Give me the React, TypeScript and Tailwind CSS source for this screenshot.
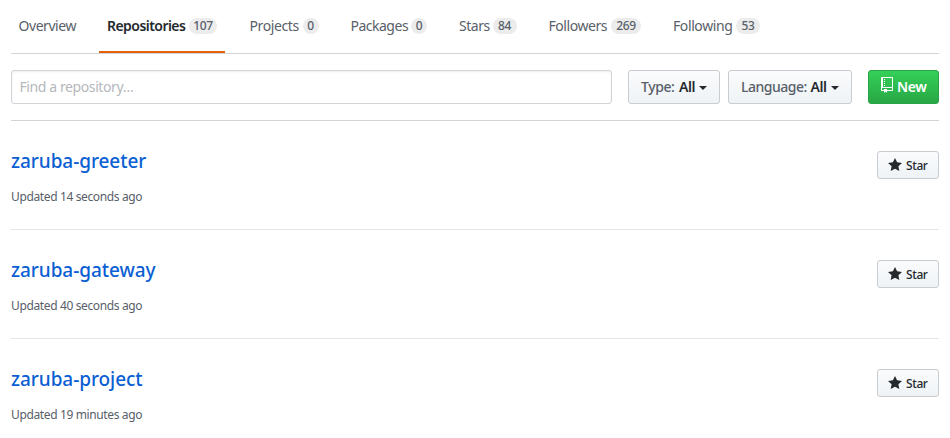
type Tab = { label: string; count?: string; labelClass: string; badgeClass?: string; active?: boolean };

const tabs: Tab[] = [
  { label: "Overview", labelClass: "w-[57px] tracking-[-0.45px]" },
  { label: "Repositories", count: "107", labelClass: "w-[78px] tracking-[-0.55px]", badgeClass: "w-7", active: true },
  { label: "Projects", count: "0", labelClass: "w-[49px] tracking-[-0.4px]", badgeClass: "w-4" },
  { label: "Packages", count: "0", labelClass: "w-[56.5px] tracking-[-0.5px]", badgeClass: "w-4" },
  { label: "Stars", count: "84", labelClass: "w-[29.5px] tracking-[-0.45px]", badgeClass: "w-6" },
  { label: "Followers", count: "269", labelClass: "w-[58.5px] tracking-[-0.45px]", badgeClass: "w-[30px]" },
  { label: "Following", count: "53", labelClass: "w-[59px] tracking-[-0.4px]", badgeClass: "w-6" },
];

const repos = [
  { name: "zaruba-greeter", updated: "Updated 14 seconds ago" },
  { name: "zaruba-gateway", updated: "Updated 40 seconds ago" },
  { name: "zaruba-project", updated: "Updated 19 minutes ago" },
];

const grayButton =
  "flex items-center rounded-[3px] border border-[#c9ccd0] bg-linear-to-b from-[#fafbfc] to-[#eff3f6] whitespace-nowrap";

function Caret() {
  return <span className="mt-px ml-1 h-0 w-0 border-x-4 border-t-4 border-x-transparent border-t-[#24292e]" />;
}

function RepoIcon() {
  return (
    <svg width="12" height="16" viewBox="0 0 12 16" fill="currentColor" className="-mt-1 shrink-0">
      <path fillRule="evenodd" d="M4 9H3V8h1v1zm0-3H3v1h1V6zm0-2H3v1h1V4zm0-2H3v1h1V2zm8-1v12c0 .55-.45 1-1 1H6v2l-1.5-1.5L3 16v-2H1c-.55 0-1-.45-1-1V1c0-.55.45-1 1-1h10c.55 0 1 .45 1 1zm-1 10H1v2h2v-1h3v1h5v-2zm0-10H2v9h9V1z" />
    </svg>
  );
}

function StarIcon() {
  return (
    <svg width="14" height="16" viewBox="0 0 14 16" fill="currentColor" className="shrink-0">
      <path fillRule="evenodd" d="M14 6l-4.9-.64L7 1 4.9 5.36 0 6l3.6 3.26L2.67 14 7 11.67 11.33 14l-.93-4.74L14 6z" />
    </svg>
  );
}

export default function App() {
  return (
    <div className="h-[438px] w-[950px] overflow-hidden bg-white px-[11px] font-['Noto_Sans',sans-serif] text-sm text-[#24292e]">
      <nav className="flex h-[54px] gap-4 border-b border-[#d1d5da]">
        {tabs.map((tab, i) => (
          <a
            key={tab.label}
            className={`-mb-px flex h-[53px] shrink-0 items-center gap-1 border-b-2 ${i === 0 ? "px-[7.5px]" : "px-2"} ${
              tab.active ? "mr-[0.5px] border-[#e36209] font-semibold" : "border-transparent text-[#586069]"
            }`}
          >
            <span className={`leading-5 whitespace-nowrap ${tab.labelClass}`}>{tab.label}</span>
            {tab.count && (
              <span className={`flex h-4 items-center justify-center rounded-full bg-[#ececed] text-xs leading-4 font-medium tracking-[-0.3px] text-[#586069] ${tab.badgeClass}`}>
                {tab.count}
              </span>
            )}
          </a>
        ))}
      </nav>

      <div className="flex h-[67px] items-start border-b border-[#d1d5da] pt-4">
        <input
          className="h-[34px] w-[601px] rounded-[3px] border border-[#d1d5da] px-[7.5px] pb-0.5 tracking-[-0.4px] shadow-[inset_0_1px_2px_rgba(27,31,35,0.075)] outline-none placeholder:text-[#b4b8bc]"
          placeholder="Find a repository…"
        />
        <button className={`${grayButton} ml-4 h-[34px] w-[92px] pl-3 font-semibold`}>
          <span className="w-[38px] text-left font-medium tracking-[-0.4px] text-[#586069]">Type:</span>
          <span className="tracking-[-0.4px]">All</span>
          <Caret />
        </button>
        <button className={`${grayButton} ml-2 h-[34px] w-[124px] pl-3 font-semibold`}>
          <span className="w-[69.5px] text-left font-medium tracking-[-0.5px] text-[#586069]">Language:</span>
          <span className="tracking-[-0.4px]">All</span>
          <Caret />
        </button>
        <button className="ml-4 flex h-[34px] w-[71px] items-center gap-1 rounded-[3px] border border-[#2aa146] bg-linear-to-b from-[#34d058] to-[#28a745] pl-3 font-semibold text-white">
          <RepoIcon />
          <span className="tracking-[-0.4px]">New</span>
        </button>
      </div>

      <ul>
        {repos.map((repo) => (
          <li key={repo.name} className="flex h-[109px] items-start justify-between border-b border-[#e1e4e8] pt-[25px]">
            <div>
              <h3 className="text-[19px] leading-[30px] font-medium tracking-[-0.06px] text-[#0b5fd3]">{repo.name}</h3>
              <p className="mt-3 text-xs leading-[18px] tracking-[-0.37px] text-[#586069]">{repo.updated}</p>
            </div>
            <button className={`${grayButton} mt-[5px] h-7 w-[62px] gap-1 pl-2.5 text-xs font-medium`}>
              <StarIcon />
              <span className="pt-0.5 tracking-[-0.4px]">Star</span>
            </button>
          </li>
        ))}
      </ul>
    </div>
  );
}
